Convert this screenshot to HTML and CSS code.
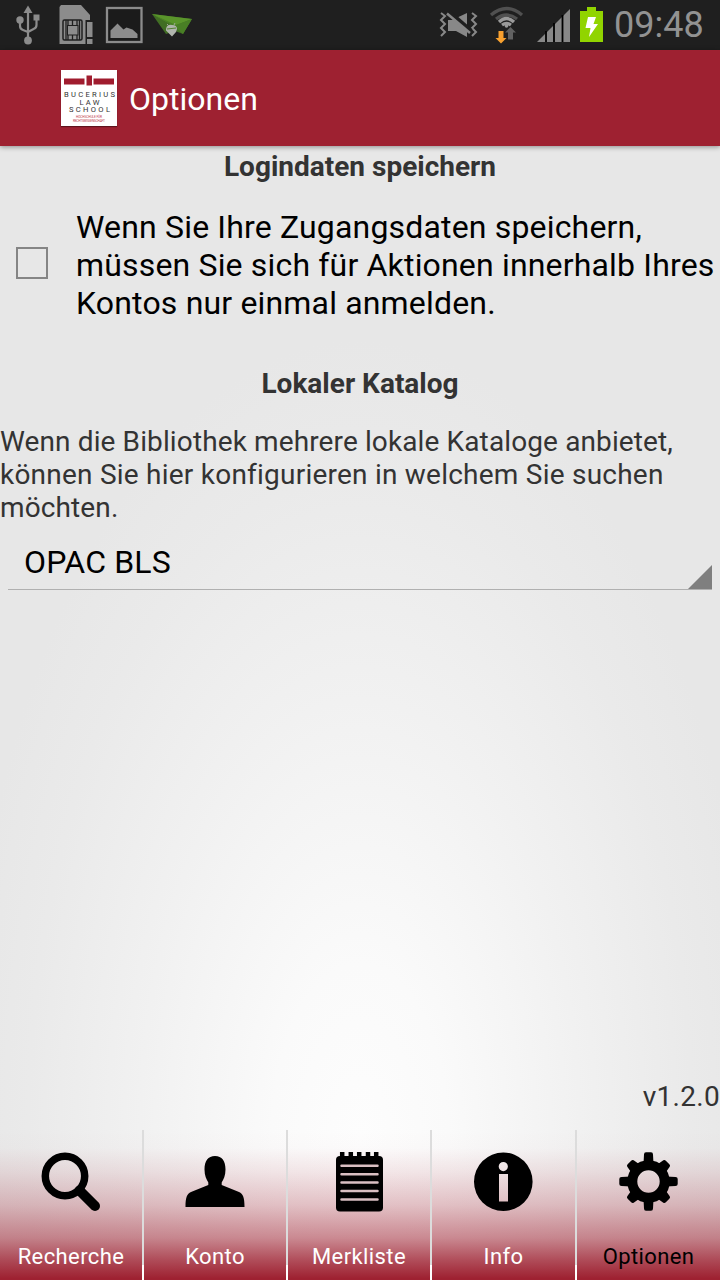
FILE: index.html
```html
<!DOCTYPE html>
<html lang="de">
<head>
<meta charset="utf-8">
<title>Optionen</title>
<link rel="stylesheet" href="styles.css">
</head>
<body>
<div class="screen">
  <header class="status">
    <svg class="status-icons" width="200" height="50" viewBox="0 0 200 50">
      <g fill="#8c8c8c" stroke="none">
        <path d="M28 5.500L32.500 13h-9z"/><circle cx="20" cy="20" r="3.700"/><rect x="33.500" y="14.500" width="6" height="6"/><circle cx="28" cy="40.500" r="3.900"/>
        <path d="M28 11v29M20 21v5q0 3 3 4l5 2M36.500 20v5q0 3-3 4l-5.500 3" fill="none" stroke="#8c8c8c" stroke-width="2.200"/>
        <path d="M61 5H81l9 10v5h-4v24H59.500V7z"/><rect x="85.500" y="20" width="8" height="25" fill="#1f1f1f"/><rect x="87" y="22" width="5.500" height="15"/><rect x="87" y="39" width="5.500" height="5"/>
        <rect x="63" y="20" width="19" height="20" rx="1.500" stroke="#1f1f1f" stroke-width="1.500"/><path d="M68 20v6M72.500 20v6M77 20v6M68 34v6M72.500 34v6M77 34v6M66 20v20M79.500 20v20" fill="none" stroke="#1f1f1f" stroke-width="1.300"/><rect x="67.500" y="25.500" width="10.500" height="9.500" stroke="#1f1f1f"/>
      </g>
      <rect x="107" y="8" width="34.500" height="34" fill="#1b1b1b" stroke="#8c8c8c" stroke-width="2.300"/>
      <path d="M110.500 38V30.500l7-7 6 6 3-2 6 2 5 4.500v4z" fill="#8c8c8c"/>
      <path d="M152 14l40 5-9 15-8-3-9 3z" fill="#416e24"/><path d="M152 14l40 5-18 7z" fill="#5a952b"/><path d="M152 14l22 12 9 8 9-15-16 6z" fill="#497f25"/>
      <path d="M166 29q1-5 6-4 5 0 5 4l-1 3-4 4.500-6-6z" fill="#b0b5ad"/><path d="M167 29l9-1" stroke="#568133" fill="none"/><path d="M169 26l-2-2M174 25l1-2" stroke="#a0a89b"/>
    </svg>
    <svg class="status-icons" width="174" height="50" viewBox="434 0 174 50">
      <path d="M441 13l4 3-4 4 4 4-4 4 4 4-4 4M472 13l4 3-4 4 4 4-4 4 4 4-4 4" fill="none" stroke="#888" stroke-width="2"/>
      <path d="M448 20h4l15-7v24l-11-6h-8z" fill="#888"/><path d="M449 12l22 19" stroke="#1f1f1f" stroke-width="4.500"/><path d="M447 13.500l23 19.500" stroke="#888" stroke-width="2.500"/>
      <g fill="none" stroke-width="3.300"><path d="M491 15q15.500-13 31 0M496 19q10.500-8 21 0" stroke="#505050"/><path d="M499 22q7.500-7 15 0M502 25q4.500-3 9 0" stroke="#9a9a9a"/></g><circle cx="506.500" cy="26" r="1.800" fill="#9a9a9a"/>
      <path d="M498.500 31h5v7h3l-5.500 5.500-5.500-5.500h3z" fill="#f9a12f"/><path d="M508 39.500v-7h-3l5.500-5.500 5.500 5.500h-3v7z" fill="#616161"/>
      <path d="M537 42l33-33v33z" fill="#888"/><path d="M546 31v11M554 23v19M562.500 15v27" stroke="#000" stroke-width="1.800"/>
      <path d="M580 11h7V7h9v4h7v31h-23z" fill="#91d400"/><path d="M588 17h8l-2.500 7h4.500l-9 13 1.500-9h-5z" fill="#fff"/>
    </svg>
    <time class="clock">09:48</time>
  </header>
  <div class="appbar">
    <svg class="logo" width="56" height="56" viewBox="0 0 56 56">
      <rect width="56" height="56" fill="#fff"/>
      <path d="M3 8.500h20.500v6H3zM32.500 8.500H53v6H32.500zM25.500 5.500h5.500v10h-5.500z" fill="#a01c2e"/>
      <g class="logo-name"><text x="3" y="27" textLength="51">BUCERIUS</text><text x="18.500" y="34.500" textLength="20">LAW</text><text x="8" y="42" textLength="41">SCHOOL</text></g>
      <g class="logo-sub"><text x="15" y="47.500" textLength="26">HOCHSCHULE FÜR</text><text x="12" y="51.500" textLength="32">RECHTSWISSENSCHAFT</text></g>
    </svg>
    <h1 class="title">Optionen</h1>
  </div>
  <main class="content">
    <h2 class="heading">Logindaten speichern</h2>
    <label class="option">
      <input class="check" type="checkbox">
      <span class="option-text">Wenn Sie Ihre Zugangsdaten speichern,<br>müssen Sie sich für Aktionen innerhalb Ihres<br>Kontos nur einmal anmelden.</span>
    </label>
    <h2 class="heading">Lokaler Katalog</h2>
    <p class="hint">Wenn die Bibliothek mehrere lokale Kataloge anbietet,<br><span class="loose">können Sie hier konfigurieren in welchem Sie suchen</span><br>möchten.</p>
    <div class="spinner"><span>OPAC BLS</span><i class="corner"></i></div>
    <p class="version">v1.2.0</p>
  </main>
  <nav class="tabs">
    <a class="tab"><svg width="60" height="60" viewBox="0 0 60 60"><circle cx="24" cy="24" r="19.700" fill="none" stroke="#000" stroke-width="7.500"/><path d="M38.500 38.500L54 54" stroke="#000" stroke-width="10" stroke-linecap="round"/></svg><span>Recherche</span></a>
    <a class="tab"><svg width="60" height="60" viewBox="0 0 60 60"><path d="M30 4c7 0 10.500 5 10.500 13.500 0 6-2 10-3.800 13v2.500l17.300 7c4 2 5.500 5 5.500 15H.500c0-10 1.500-13 5.500-15l17.300-7v-2.500c-1.800-3-3.800-7-3.800-13C19.500 9 23 4 30 4z"/></svg><span>Konto</span></a>
    <a class="tab"><svg width="60" height="60" viewBox="0 0 60 60"><rect x="7" y="4" width="47" height="55.500" rx="4"/><path d="M13.200 0v6M21.800 0v6M30.200 0v6M39 0v6M47.200 0v6" stroke="#000" stroke-width="4.500"/><path class="rules" d="M12.500 13.800h36M12.500 22.200h36M12.500 30.600h36M12.500 39h36M12.500 47.500h36"/></svg><span>Merkliste</span></a>
    <a class="tab"><svg width="60" height="60" viewBox="0 0 60 60"><path fill-rule="evenodd" d="M29.300 .500a29.300 29.300 0 1 1 0 58.600a29.300 29.300 0 1 1 0-58.600zM29.300 10a4.600 4.600 0 1 0 0 9.200a4.600 4.600 0 1 0 0-9.200zM25 22v27.500h9V22z"/></svg><span>Info</span></a>
    <a class="tab active"><svg width="60" height="60" viewBox="0 0 60 60"><circle cx="29.500" cy="29.500" r="16.200" fill="none" stroke="#000"/><path d="M24.500 12l.5-9.500q0-2.200 2-2.200h5q2 0 2 2.200l.5 9.500zM24.500 47l.5 9.500q0 2.200 2 2.200h5q2 0 2-2.200l.5-9.500zM12 24.500l-9.500.5q-2.200 0-2.200 2v5q0 2 2.200 2l9.500.5zM47 24.500l9.500.5q2.200 0 2.200 2v5q0 2-2.200 2l-9.500.5z"/><path transform="rotate(45 29.500 29.500)" d="M23.500 12l1.500-8q.3-1.500 2-1.500h5q1.700 0 2 1.500l1.500 8zM23.500 47l1.500 8q.3 1.500 2 1.500h5q1.700 0 2-1.500l1.500-8zM12 23.500l-8 1.500q-1.500.3-1.500 2v5q0 1.700 1.500 2l8 1.500zM47 23.500l8 1.500q1.500.3 1.500 2v5q0 1.700-1.500 2l-8 1.500z"/></svg><span>Optionen</span></a>
  </nav>
</div>
</body>
</html>
```
FILE: styles.css
```css
* { box-sizing: border-box; }
body, h1, h2, p { margin: 0; }
body { font-family: Roboto, sans-serif; color: #333; }
.screen {
  width: 720px; height: 1280px; display: flex; flex-direction: column; overflow: hidden;
  background: radial-gradient(ellipse 400px 800px at 360px 1140px, #fdfdfd, #fafafa 22%, #f1f1f1 55%, #eaeaea 83%, #e7e7e7);
}
.status { height: 50px; flex: none; display: flex; background: #1f1f1f; }
.status-icons { flex: none; }
.status-icons + .status-icons { margin-left: 234px; }
.clock { margin-left: 6px; color: #929292; font-size: 36px; line-height: 50px; white-space: nowrap; }
.appbar {
  height: 96px; flex: none; display: flex; align-items: center; padding-left: 61px; gap: 12px;
  background: #9e2131; box-shadow: 0 1px 5px rgba(0,0,0,.4);
}
.logo { box-shadow: 0 1px 1px rgba(0,0,0,.4); }
.logo-name { font: 400 7.600px Roboto, sans-serif; fill: #333; }
.logo-sub { font: 3.200px Roboto, sans-serif; fill: #c0394b; }
.title { font-size: 32px; font-weight: 400; line-height: 38px; padding-top: 1px; color: #fff; }
.content { flex: 1; display: flex; flex-direction: column; padding-top: 4px; }
.heading { font-size: 28px; font-weight: 700; line-height: 33px; text-align: center; }
.option { display: flex; align-items: center; gap: 28px; margin: 25px 0 45px; padding-left: 16px; color: #000; }
.check { appearance: none; flex: none; width: 32px; height: 32px; margin: -4px 0 0; border: 2px solid #858585; }
.option-text { font-size: 32px; line-height: 38px; letter-spacing: .17px; white-space: nowrap; }
.hint { font-size: 28px; line-height: 33px; letter-spacing: .12px; margin-top: 25px; white-space: nowrap; }
.loose { letter-spacing: .23px; }
.spinner {
  display: flex; justify-content: space-between; align-items: flex-end; height: 47px; margin: 19px 8px 0;
  padding-left: 16px; border-bottom: 1px solid #b0b0b0; color: #000; font-size: 32px; line-height: 38px; letter-spacing: .15px;
}
.spinner span { align-self: flex-start; }
.corner { width: 24px; height: 24px; background: #7f7f7f; clip-path: polygon(100% 0, 100% 100%, 0 100%); }
.version { margin: auto 0 17px; text-align: right; font-size: 28px; line-height: 33px; letter-spacing: .3px; }
.tabs {
  height: 150px; flex: none; display: grid; grid-template-columns: 144px 144px 144px 145px 143px;
  background: linear-gradient(rgba(158,33,49,0), rgba(158,33,49,.01) 12%, rgba(158,33,49,.1) 28%, rgba(158,33,49,.27) 50%, rgba(158,33,49,.52) 72%, rgba(158,33,49,.8) 87%, #9e2131 99%);
}
.tab {
  display: flex; flex-direction: column; align-items: center; padding-top: 22px; gap: 32px;
  border-right: 2px solid #dcdcdc; color: #fff; font-size: 22px; line-height: 26px; letter-spacing: .4px;
  border-image: linear-gradient(#dcdcdc 134px, #fff 134px) 1;
}
.tab:last-child { border: 0; }
.tab.active { color: #000; }
.active circle { stroke-width: 10px; }
.rules { stroke: #d9bfc2; stroke-width: 2.500px; stroke-linecap: round; }
```
